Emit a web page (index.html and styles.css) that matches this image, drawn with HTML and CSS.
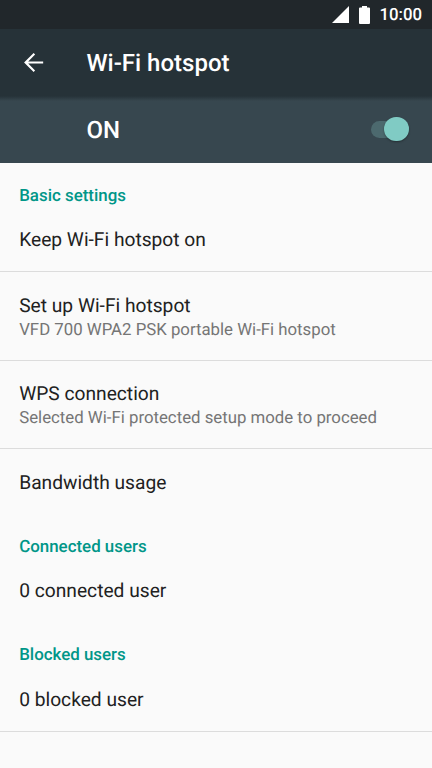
FILE: index.html
```html
<!DOCTYPE html>
<html lang="en">
<head>
<meta charset="utf-8">
<title>Wi-Fi hotspot</title>
<link rel="stylesheet" href="styles.css">
</head>
<body>
<div class="status">
<svg class="signal" viewBox="0 0 17 17"><path d="M0 17L17 0V17Z"/></svg>
<svg class="battery" viewBox="0 0 11 18"><path d="M3 0H8V1.5H10Q11 1.5 11 2.5V17Q11 18 10 18H1Q0 18 0 17V2.5Q0 1.5 1 1.5H3Z"/></svg>
<span class="clock">10:00</span>
</div>
<header class="toolbar">
<svg class="back" viewBox="0 0 24 24"><path d="M20 11.15H7.63l5.69-5.69L12.1 4.2 4.2 12l7.9 7.8 1.21-1.26L7.63 12.85H20z"/></svg>
<h1>Wi-Fi hotspot</h1>
</header>
<div class="switchbar"><span class="state">ON</span><div class="switch"><span class="thumb"></span></div></div>
<main>
<h2>Basic settings</h2>
<div class="row single">Keep Wi-Fi hotspot on</div>
<div class="row double line"><span class="title">Set up Wi-Fi hotspot</span><span class="sub">VFD 700 WPA2 PSK portable Wi-Fi hotspot</span></div>
<div class="row double line"><span class="title">WPS connection</span><span class="sub">Selected Wi-Fi protected setup mode to proceed</span></div>
<div class="row single tall line">Bandwidth usage</div>
<h2>Connected users</h2>
<div class="row single">0 connected user</div>
<h2>Blocked users</h2>
<div class="row single">0 blocked user</div>
<div class="end"></div>
</main>
</body>
</html>
```
FILE: styles.css
```css
* { box-sizing: border-box; }
body { margin: 0; height: 768px; overflow: hidden; background: #fafafa; color: #212121; font-family: Roboto, sans-serif; text-rendering: geometricPrecision; }
.status { height: 29px; background: #21272b; color: #fff; display: flex; align-items: center; justify-content: flex-end; padding-right: 10px; }
.signal { width: 17px; height: 17px; fill: #fff; margin-right: 10px; }
.battery { width: 11px; height: 18px; fill: #fff; margin-right: 9px; }
.clock { font-size: 16.8px; font-weight: 500; line-height: 29px; padding-top: 1px; }
.toolbar { height: 67px; background: #263238; color: #fff; display: flex; align-items: center; padding-left: 19px; }
.back { width: 29px; height: 29px; fill: #fff; margin-right: 38.4px; }
h1 { margin: 0; padding-top: 1px; font-size: 24px; font-weight: 500; }
.switchbar { height: 67px; background: linear-gradient(#263238, #37474f 5px); color: #fff; display: flex; align-items: center; justify-content: space-between; padding: 0 23.5px 0 86.4px; }
.state { padding-top: 1px; font-size: 24px; font-weight: 500; }
.switch { width: 38px; height: 17px; margin-bottom: 1px; border-radius: 9px; background: #4c696e; display: flex; align-items: center; justify-content: flex-end; }
.thumb { width: 24.5px; height: 24.5px; border-radius: 50%; background: #80cbc4; flex: none; box-shadow: 0 1px 2px rgba(0, 0, 0, .35); }
h2 { margin: 0; height: 45px; padding: 19.6px 19.2px 0; font-size: 16.9px; line-height: 26px; font-weight: 500; color: #009688; }
.row { padding: 0 19.2px; font-size: 19.2px; display: flex; }
.single { height: 63.4px; align-items: center; }
.tall { height: 66px; padding-top: 1px; }
.double { height: 88.4px; flex-direction: column; justify-content: center; padding-top: 3px; }
.line { border-top: 1px solid #dcdcdc; }
.title { line-height: 24px; }
.sub { font-size: 16.8px; line-height: 24px; color: #757575; }
.end { border-top: 1px solid #dcdcdc; }
```
